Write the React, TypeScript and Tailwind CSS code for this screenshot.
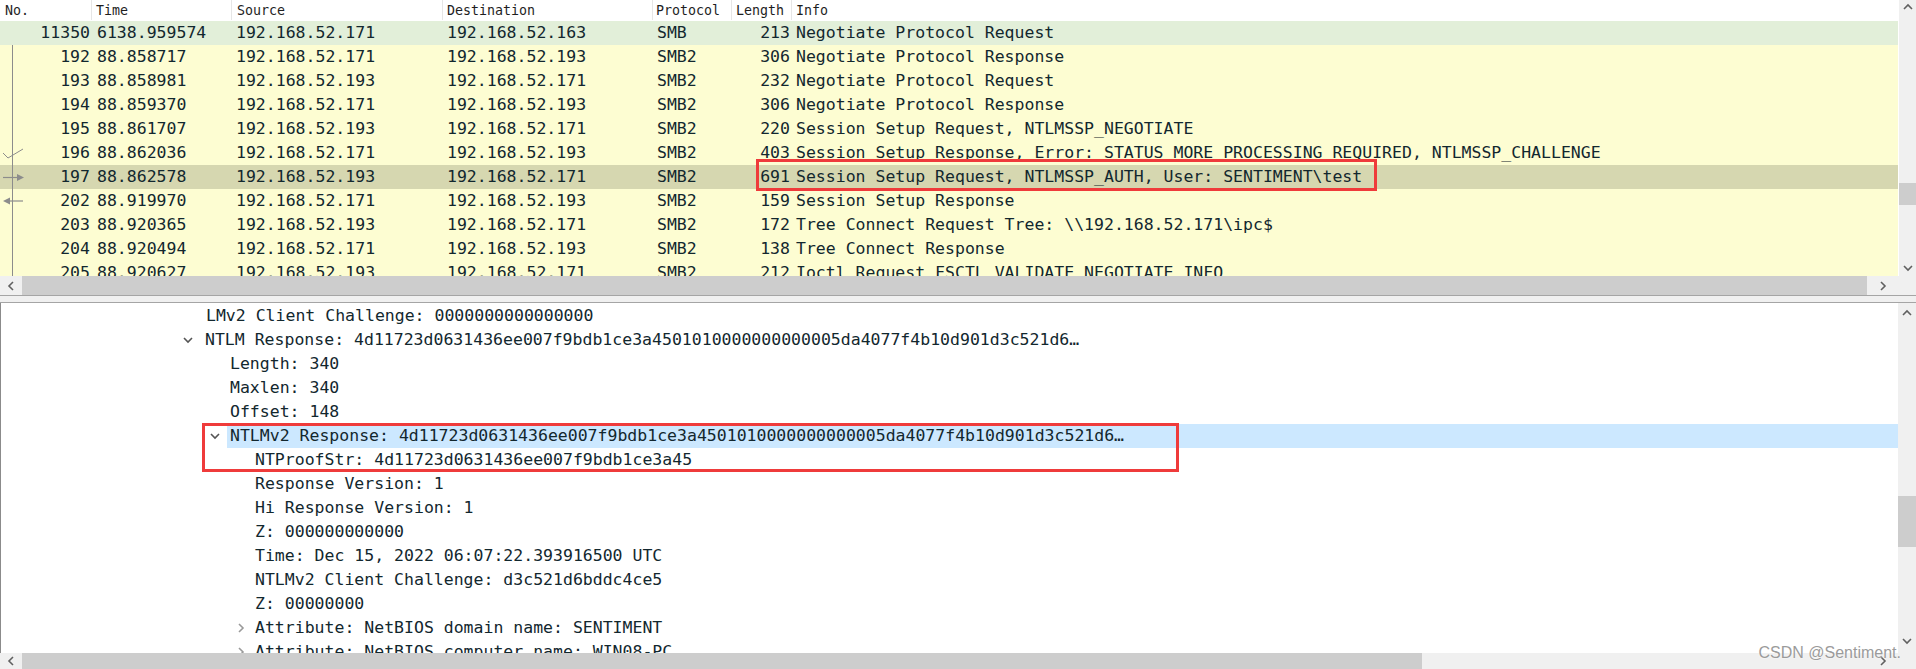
import React from 'react';

type Packet = {
	no: string;
	time: string;
	src: string;
	dst: string;
	proto: string;
	len: string;
	info: string;
	kind: 'green' | 'yellow' | 'selected';
	mark?: 'ack' | 'right' | 'left';
};

const packets: Packet[] = [
	{ no: '11350', time: '6138.959574', src: '192.168.52.171', dst: '192.168.52.163', proto: 'SMB', len: '213', info: 'Negotiate Protocol Request', kind: 'green' },
	{ no: '192', time: '88.858717', src: '192.168.52.171', dst: '192.168.52.193', proto: 'SMB2', len: '306', info: 'Negotiate Protocol Response', kind: 'yellow' },
	{ no: '193', time: '88.858981', src: '192.168.52.193', dst: '192.168.52.171', proto: 'SMB2', len: '232', info: 'Negotiate Protocol Request', kind: 'yellow' },
	{ no: '194', time: '88.859370', src: '192.168.52.171', dst: '192.168.52.193', proto: 'SMB2', len: '306', info: 'Negotiate Protocol Response', kind: 'yellow' },
	{ no: '195', time: '88.861707', src: '192.168.52.193', dst: '192.168.52.171', proto: 'SMB2', len: '220', info: 'Session Setup Request, NTLMSSP_NEGOTIATE', kind: 'yellow' },
	{ no: '196', time: '88.862036', src: '192.168.52.171', dst: '192.168.52.193', proto: 'SMB2', len: '403', info: 'Session Setup Response, Error: STATUS_MORE_PROCESSING_REQUIRED, NTLMSSP_CHALLENGE', kind: 'yellow', mark: 'ack' },
	{ no: '197', time: '88.862578', src: '192.168.52.193', dst: '192.168.52.171', proto: 'SMB2', len: '691', info: 'Session Setup Request, NTLMSSP_AUTH, User: SENTIMENT\\test', kind: 'selected', mark: 'right' },
	{ no: '202', time: '88.919970', src: '192.168.52.171', dst: '192.168.52.193', proto: 'SMB2', len: '159', info: 'Session Setup Response', kind: 'yellow', mark: 'left' },
	{ no: '203', time: '88.920365', src: '192.168.52.193', dst: '192.168.52.171', proto: 'SMB2', len: '172', info: 'Tree Connect Request Tree: \\\\192.168.52.171\\ipc$', kind: 'yellow' },
	{ no: '204', time: '88.920494', src: '192.168.52.171', dst: '192.168.52.193', proto: 'SMB2', len: '138', info: 'Tree Connect Response', kind: 'yellow' },
	{ no: '205', time: '88.920627', src: '192.168.52.193', dst: '192.168.52.171', proto: 'SMB2', len: '212', info: 'Ioctl Request FSCTL_VALIDATE_NEGOTIATE_INFO', kind: 'yellow' },
];

type TreeRow = { pad: string; text: string; icon?: 'down' | 'right'; iconShift?: string; selected?: boolean };

const tree: TreeRow[] = [
	{ pad: 'pl-[180px]', text: 'LMv2 Client Challenge: 0000000000000000' },
	{ pad: 'pl-[179px]', text: 'NTLM Response: 4d11723d0631436ee007f9bdb1ce3a4501010000000000005da4077f4b10d901d3c521d6…', icon: 'down', iconShift: '-ml-[6px]' },
	{ pad: 'pl-[204px]', text: 'Length: 340' },
	{ pad: 'pl-[204px]', text: 'Maxlen: 340' },
	{ pad: 'pl-[204px]', text: 'Offset: 148' },
	{ pad: 'pl-[204px]', text: 'NTLMv2 Response: 4d11723d0631436ee007f9bdb1ce3a4501010000000000005da4077f4b10d901d3c521d6…', icon: 'down', iconShift: '-ml-[2px]', selected: true },
	{ pad: 'pl-[229px]', text: 'NTProofStr: 4d11723d0631436ee007f9bdb1ce3a45' },
	{ pad: 'pl-[229px]', text: 'Response Version: 1' },
	{ pad: 'pl-[229px]', text: 'Hi Response Version: 1' },
	{ pad: 'pl-[229px]', text: 'Z: 000000000000' },
	{ pad: 'pl-[229px]', text: 'Time: Dec 15, 2022 06:07:22.393916500 UTC' },
	{ pad: 'pl-[229px]', text: 'NTLMv2 Client Challenge: d3c521d6bddc4ce5' },
	{ pad: 'pl-[229px]', text: 'Z: 00000000' },
	{ pad: 'pl-[229px]', text: 'Attribute: NetBIOS domain name: SENTIMENT', icon: 'right' },
	{ pad: 'pl-[229px]', text: 'Attribute: NetBIOS computer name: WIN08-PC', icon: 'right' },
];

const rowBg = {
	green: 'bg-[#e2efd9]',
	yellow: 'bg-[#fdfdd2]',
	selected: 'bg-[#d6d7b0]',
};

function Chevron({ dir, className = '' }: { dir: 'up' | 'down' | 'left' | 'right'; className?: string }) {
	const pts = {
		up: '1,6 5,2 9,6',
		down: '1,2 5,6 9,2',
		left: '6,1 2,5 6,9',
		right: '2,1 6,5 2,9',
	}[dir];
	const horiz = dir === 'up' || dir === 'down';
	return (
		<svg width={horiz ? 10 : 8} height={horiz ? 8 : 10} viewBox={horiz ? '0 0 10 8' : '0 0 8 10'} className={className}>
			<polyline points={pts} fill="none" stroke="currentColor" strokeWidth="1.6" />
		</svg>
	);
}

function Marker({ mark }: { mark: Packet['mark'] }) {
	if (!mark) return null;
	return (
		<svg width="26" height="24" className="absolute left-0 top-0 text-[#8c8c8c]">
			{mark === 'ack' && <polyline points="3,12 8,17 23,8" fill="none" stroke="currentColor" strokeWidth="1" />}
			{mark === 'right' && (
				<>
					<line x1="3" y1="12.5" x2="18" y2="12.5" stroke="currentColor" strokeWidth="1.2" />
					<polygon points="17,9 24,12.5 17,16" fill="currentColor" />
				</>
			)}
			{mark === 'left' && (
				<>
					<polygon points="3,12 10,8.5 10,15.5" fill="currentColor" />
					<line x1="10" y1="12" x2="23" y2="12" stroke="currentColor" strokeWidth="1.2" />
				</>
			)}
		</svg>
	);
}

function HScroll({ thumbEnd, className = '' }: { thumbEnd: string; className?: string }) {
	return (
		<div className={`flex bg-[#f0f0f0] text-[#606060] ${className}`}>
			<div className="w-[22px] flex items-center justify-center">
				<Chevron dir="left" />
			</div>
			<div className={`bg-[#cdcdcd] ${thumbEnd}`} />
			<div className="flex-1" />
			<div className="w-[31px] flex items-center justify-center">
				<Chevron dir="right" />
			</div>
		</div>
	);
}

export default function App() {
	return (
		<div className="relative w-[1916px] h-[669px] overflow-hidden bg-white text-[#12272e] font-['DejaVu_Sans_Mono',monospace] text-[16.5px] leading-[24px]">
			{/* Packet list */}
			<div className="flex h-[276px]">
				<div className="flex-1 flex flex-col min-w-0">
					<div className="h-[21px] flex bg-white text-[13.3px] leading-[21px] text-[#1e1e1e] border-b border-white">
						<div className="w-[92px] pl-[5px] border-r border-[#e6e6e6]">No.</div>
						<div className="w-[140px] pl-[4px] border-r border-[#e6e6e6]">Time</div>
						<div className="w-[211px] pl-[5px] border-r border-[#e6e6e6]">Source</div>
						<div className="w-[210px] pl-[4px] border-r border-[#e6e6e6]">Destination</div>
						<div className="w-[79px] pl-[3px] border-r border-[#e6e6e6]">Protocol</div>
						<div className="w-[60px] pl-[4px] border-r border-[#e6e6e6]">Length</div>
						<div className="flex-1 pl-[4px]">Info</div>
					</div>
					<div className="relative flex-1 overflow-hidden">
						{packets.map(p => (
							<div key={p.no} className={`flex h-[24px] whitespace-pre ${rowBg[p.kind]}`}>
								<div className="relative w-[92px] pr-[2px] text-right">
									<Marker mark={p.mark} />
									{p.no}
								</div>
								<div className="w-[140px] pl-[5px]">{p.time}</div>
								<div className="w-[211px] pl-[4px]">{p.src}</div>
								<div className="w-[210px] pl-[4px]">{p.dst}</div>
								<div className="w-[79px] pl-[4px]">{p.proto}</div>
								<div className="w-[60px] pr-[2px] text-right">{p.len}</div>
								<div className="flex-1 pl-[4px]">{p.info}</div>
							</div>
						))}
						<div className="absolute left-[12px] top-[24px] bottom-0 w-px bg-[#8c8c8c]" />
					</div>
				</div>
				<div className="w-[18px] flex flex-col bg-[#f0f0f0] border-l border-white text-[#606060]">
					<div className="h-[14px] flex items-center justify-center">
						<Chevron dir="up" />
					</div>
					<div className="h-[169px]" />
					<div className="h-[22px] bg-[#cdcdcd]" />
					<div className="flex-1" />
					<div className="h-[16px] flex items-center justify-center">
						<Chevron dir="down" />
					</div>
				</div>
			</div>
			<div className="flex h-[19px]">
				<HScroll thumbEnd="w-[1845px]" className="flex-1" />
				<div className="w-[18px] bg-[#f0f0f0]" />
			</div>

			{/* Splitter */}
			<div className="h-[8px] bg-[#f0f0f0] border-t border-[#8b8b8b] border-b border-[#a5a5a5]" />

			{/* Packet details */}
			<div className="flex h-[350px] border-l border-[#8b8b8b]">
				<div className="flex-1 min-w-0 overflow-hidden pt-[1px]">
					{tree.map((r, i) => (
						<div key={i} className={`flex h-[24px] whitespace-pre ${r.pad}`}>
							<div className="w-[22px] flex items-center justify-center">
								{r.icon === 'down' && <Chevron dir="down" className={`text-[#555] ${r.iconShift ?? ''}`} />}
								{r.icon === 'right' && <Chevron dir="right" className="text-[#9a9a9a]" />}
							</div>
							<div className={`flex-1 pl-[3px] ${r.selected ? 'bg-[#cce8ff]' : ''}`}>{r.text}</div>
						</div>
					))}
				</div>
				<div className="w-[18px] flex flex-col bg-[#f0f0f0] text-[#606060]">
					<div className="h-[20px] flex items-center justify-center">
						<Chevron dir="up" />
					</div>
					<div className="h-[173px]" />
					<div className="h-[51px] bg-[#cdcdcd]" />
					<div className="flex-1" />
					<div className="h-[24px] flex items-center justify-center">
						<Chevron dir="down" />
					</div>
				</div>
			</div>
			<div className="flex h-[16px]">
				<HScroll thumbEnd="w-[1400px]" className="flex-1" />
				<div className="w-[18px] bg-[#f0f0f0]" />
			</div>

			{/* Annotations */}
			<div className="absolute left-[756px] top-[159px] w-[621px] h-[32px] border-[3px] border-[#ef3b3b]" />
			<div className="absolute left-[202px] top-[423px] w-[977px] h-[49px] border-[3px] border-[#ef3b3b]" />
			<div className="absolute right-[15px] top-[643px] font-['Liberation_Sans',sans-serif] text-[16px] leading-[20px] text-[#9b9b9b] [text-shadow:0_0_2px_#fff]">
				CSDN @Sentiment.
			</div>
		</div>
	);
}
